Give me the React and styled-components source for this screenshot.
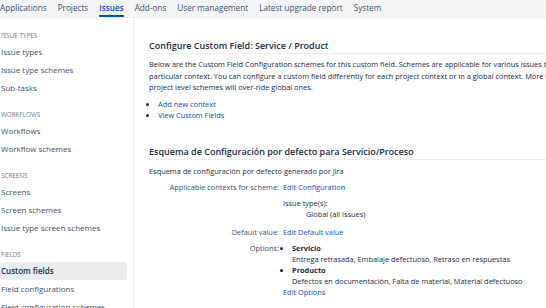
import React from "react";
import styled, { createGlobalStyle } from "styled-components";

const Global = createGlobalStyle`
  html, body { margin: 0; padding: 0; overflow: hidden; background: #fff; }
  body { font-family: "Open Sans", "Noto Sans", sans-serif; color: #172b4d; }
  * { box-sizing: border-box; }
`;

const Page = styled.div`
  width: 546px;
  height: 308px;
  overflow: hidden;
  display: flex;
  flex-direction: column;
`;

const TopNav = styled.nav`
  height: 18px;
  flex: none;
  background: #f4f5f7;
  border-bottom: 1px solid #ebecf0;
  display: flex;
  gap: 11px;
  padding-left: 0;
  white-space: nowrap;
`;

const NavItem = styled.a`
  font-size: 8.2px;
  line-height: 16px;
  height: 17px;
  color: ${(p) => (p.$active ? "#0052cc" : "#42526e")};
  font-weight: ${(p) => (p.$active ? 600 : 400)};
  border-bottom: 2px solid ${(p) => (p.$active ? "#0052cc" : "transparent")};
  text-decoration: none;
`;

const Body = styled.div`
  flex: 1;
  display: flex;
  min-height: 0;
`;

const Sidebar = styled.aside`
  width: 134px;
  flex: none;
  border-right: 1px solid #ebecf0;
  padding: 12px 6px 0 0;
`;

const Group = styled.div`
  & + & { margin-top: 12px; }
`;

const GroupTitle = styled.div`
  font-size: 6.3px;
  height: 13px;
  line-height: 12px;
  color: #6b778c;
  text-transform: uppercase;
  padding-left: 1px;
`;

const SideItem = styled.div`
  height: 18px;
  line-height: 18px;
  font-size: 8px;
  padding-left: 1px;
  border-radius: 3px;
  white-space: nowrap;
  color: ${(p) => (p.$active ? "#172b4d" : "#42526e")};
  background: ${(p) => (p.$active ? "#ebecf0" : "transparent")};
  font-weight: ${(p) => (p.$active ? 600 : 400)};
`;

const Main = styled.main`
  flex: none;
  width: 700px;
  padding: 21px 0 0 15px;
  font-size: 7.4px;
`;

const H1 = styled.h1`
  margin: 0;
  font-size: 9px;
  font-weight: 600;
  line-height: 14px;
  border-bottom: 1px solid #ebecf0;
  color: #172b4d;
`;

const H2 = styled(H1)`
  margin-top: 24px;
`;

const Para = styled.p`
  margin: 5px 0 0;
  line-height: 11.5px;
  white-space: nowrap;
  color: #172b4d;
`;

const LinkList = styled.ul`
  margin: 5px 0 0;
  padding-left: 9px;
  line-height: 11px;
  list-style: disc;
  & li::marker { color: #172b4d; }
`;

const Link = styled.a`
  color: #0052cc;
  text-decoration: none;
`;

const Desc = styled.div`
  margin-top: 5px;
  line-height: 12px;
  color: #172b4d;
`;

const Props = styled.div`
  display: grid;
  grid-template-columns: 130px 1fr;
  column-gap: 4px;
  line-height: 11px;
  margin-top: 5px;
`;

const Label = styled.div`
  text-align: right;
  color: #42526e;
  margin-top: ${(p) => p.$mt || 0}px;
`;

const Value = styled.div`
  margin-top: ${(p) => p.$mt || 0}px;
  color: #172b4d;
`;

const Indent = styled.div`
  padding-left: 23px;
`;

const OptList = styled.ul`
  margin: 0;
  padding-left: 9px;
  list-style: disc;
`;

const OptName = styled.div`
  font-weight: 700;
`;

const nav = [
  "Applications",
  "Projects",
  "Issues",
  "Add-ons",
  "User management",
  "Latest upgrade report",
  "System",
];

const groups = [
  { title: "Issue types", items: ["Issue types", "Issue type schemes", "Sub-tasks"] },
  { title: "Workflows", items: ["Workflows", "Workflow schemes"] },
  { title: "Screens", items: ["Screens", "Screen schemes", "Issue type screen schemes"] },
  { title: "Fields", items: ["Custom fields", "Field configurations", "Field configuration schemes"] },
];

export default function App() {
  return (
    <>
      <Global />
      <Page>
        <TopNav>
          {nav.map((n) => (
            <NavItem key={n} $active={n === "Issues"}>
              {n}
            </NavItem>
          ))}
        </TopNav>
        <Body>
          <Sidebar>
            {groups.map((g) => (
              <Group key={g.title}>
                <GroupTitle>{g.title}</GroupTitle>
                {g.items.map((i) => (
                  <SideItem key={i} $active={i === "Custom fields"}>
                    {i}
                  </SideItem>
                ))}
              </Group>
            ))}
          </Sidebar>
          <Main>
            <H1>Configure Custom Field: Service / Product</H1>
            <Para>
              Below are the Custom Field Configuration schemes for this custom field. Schemes are applicable for various issues types in a
              <br />
              particular context. You can configure a custom field differently for each project context or in a global context. More specific
              <br />
              project level schemes will over-ride global ones.
            </Para>
            <LinkList>
              <li><Link>Add new context</Link></li>
              <li><Link>View Custom Fields</Link></li>
            </LinkList>
            <H2>Esquema de Configuración por defecto para Servicio/Proceso</H2>
            <Desc>Esquema de configuración por defecto generado por Jira</Desc>
            <Props>
              <Label>Applicable contexts for scheme:</Label>
              <Value><Link>Edit Configuration</Link></Value>
              <div />
              <Value $mt={5}>
                Issue type(s):
                <Indent>Global (all issues)</Indent>
              </Value>
              <Label $mt={7}>Default value:</Label>
              <Value $mt={7}><Link>Edit Default value</Link></Value>
              <Label $mt={5}>Options:</Label>
              <Value $mt={5}>
                <OptList>
                  <li>
                    <OptName>Servicio</OptName>
                    Entrega retrasada, Embalaje defectuoso, Retraso en respuestas
                  </li>
                  <li>
                    <OptName>Producto</OptName>
                    Defectos en documentación, Falta de material, Material defectuoso
                  </li>
                </OptList>
                <Link>Edit Options</Link>
              </Value>
            </Props>
          </Main>
        </Body>
      </Page>
    </>
  );
}
